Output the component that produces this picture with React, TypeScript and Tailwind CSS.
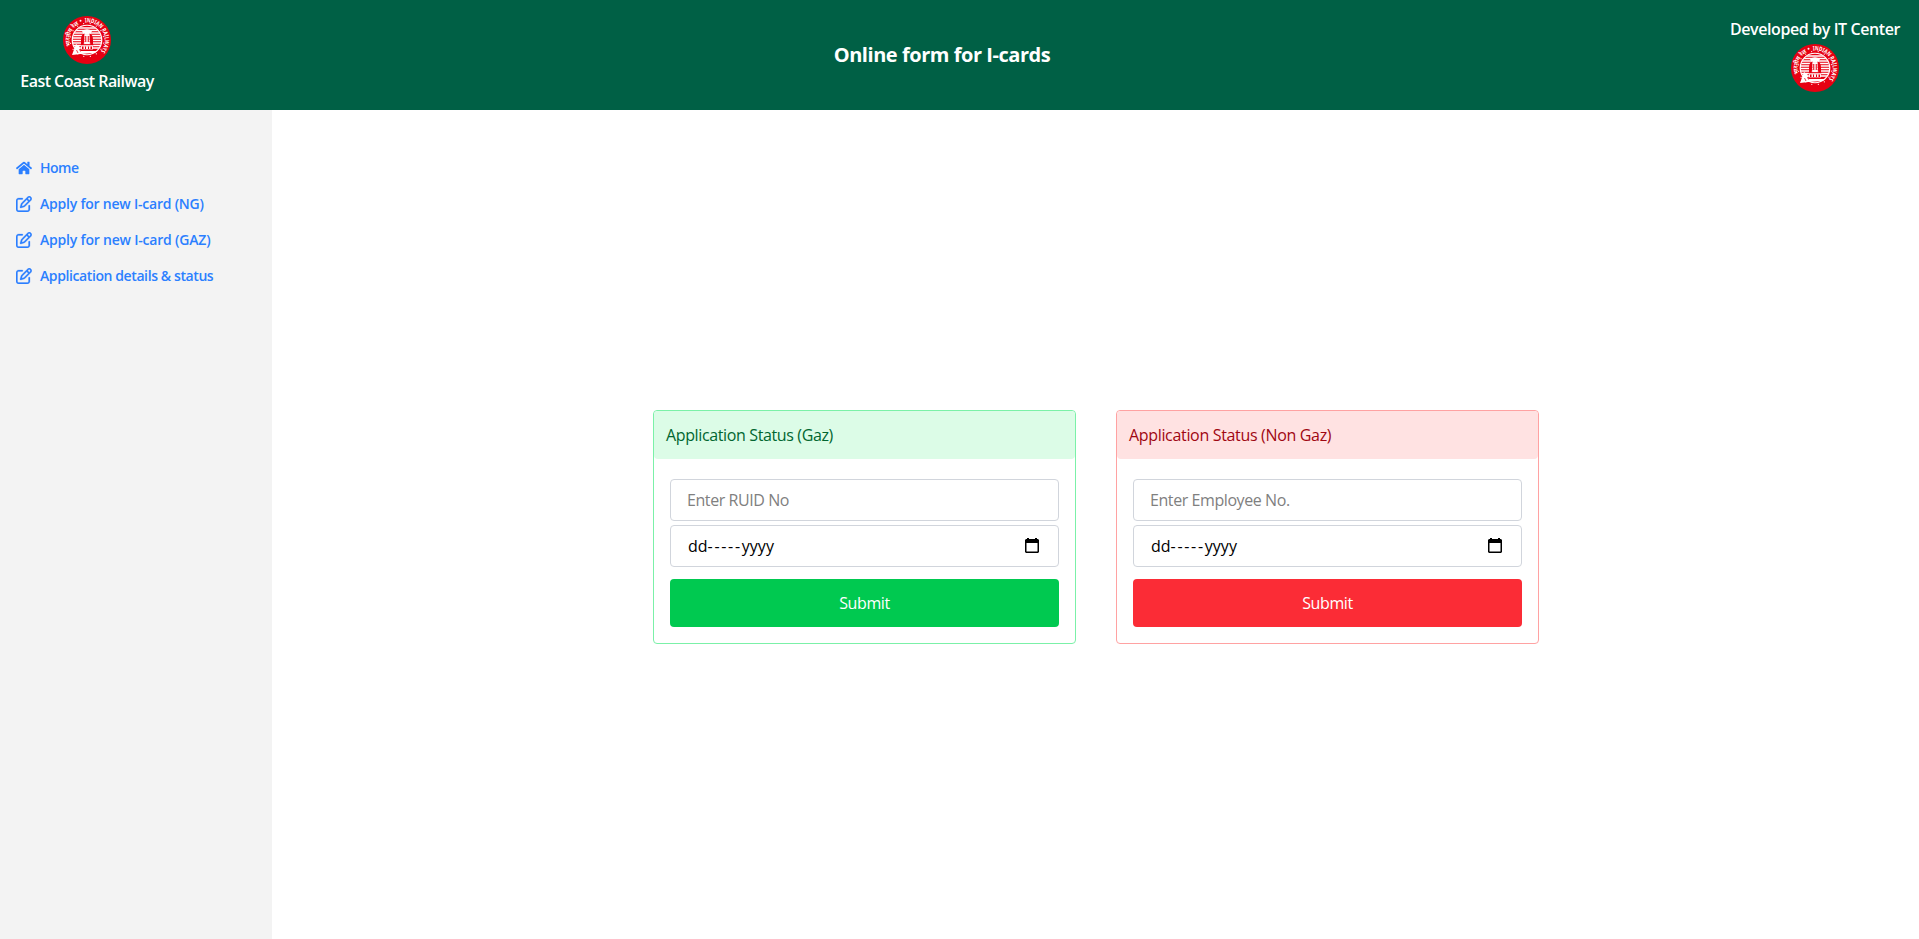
import { useId, type ReactNode } from "react";
import { FaHome } from "react-icons/fa";
import { FaRegPenToSquare } from "react-icons/fa6";

function RailwayLogo() {
  const id = useId();
  const dots = Array.from({ length: 16 }, (_, i) => i * 22.5);
  return (
    <svg viewBox="0 0 96 96" className="block size-12" aria-label="Indian Railways">
      <defs>
        <path id={`${id}-hi`} d="M 15.5 60 A 34.7 34.7 0 0 1 40 14.2" />
        <path id={`${id}-en`} d="M 44 13 A 35.2 35.2 0 0 1 72 74" />
        <clipPath id={`${id}-disc`}>
          <circle cx="48" cy="48" r="29" />
        </clipPath>
      </defs>
      <circle cx="48" cy="48" r="48" fill="#e60012" />
      <g fill="#fff" fontFamily="Noto Sans, sans-serif" fontWeight="700">
        <text fontSize="12">
          <textPath href={`#${id}-hi`} textLength="50" lengthAdjust="spacingAndGlyphs">भारतीय रेल</textPath>
        </text>
        <text fontSize="12">
          <textPath href={`#${id}-en`} textLength="84" lengthAdjust="spacingAndGlyphs">INDIAN RAILWAYS</textPath>
        </text>
      </g>
      <circle cx="35" cy="9.5" r="2" fill="#fff" />
      {dots.map((a) => (
        <circle key={a} cx="48" cy="14.6" r="1.2" fill="#fff" transform={`rotate(${a + 11} 48 48)`} />
      ))}
      <circle cx="48" cy="48" r="29.5" fill="none" stroke="#fff" strokeWidth="2.4" />
      <g clipPath={`url(#${id}-disc)`}>
        {[24, 29, 34, 39, 44, 49, 54, 59, 64].map((y) => (
          <path key={y} d={`M18 ${y}H78`} stroke="#fff" strokeWidth="3" />
        ))}
        <path d="M38 30q10-7 20 0l-3 6H41z" fill="#fff" />
      </g>
      <path d="M36 58V47q0-10 7-12v11l-2 12zM60 58V47q0-10-7-12v11l2 12z" fill="#e60012" />
      <path d="M43 36h10v20H43z" fill="#fff" opacity=".9" />
      <path d="M44.500 40h2v12h-2zM49.500 40h2v12h-2z" fill="#e60012" />
      <path d="M36 58h24v9H36z" fill="#fff" opacity=".8" />
      <path d="M35 57h26v1.500H35zM38 61h3v5h-3zM44 61h2v5h-2zM50 61h2v5h-2zM55 61h3v5h-3z" fill="#e60012" />
      <path d="M18 78l8-22 7 5 2 9h34l-6 4-28 2z" fill="#fff" />
      <path d="M27 68l3 6M33 66l2 5" stroke="#e60012" strokeWidth="1.500" />
    </svg>
  );
}

function NavLink({ icon, className, children }: { icon: ReactNode; className: string; children: ReactNode }) {
  return (
    <a href="#" className="flex h-9 items-center gap-2 text-sm font-semibold text-[#2b7fff]">
      {icon}
      <span className={className}>{children}</span>
    </a>
  );
}

function EditIcon() {
  return <FaRegPenToSquare className="size-4 stroke-current stroke-[8px]" />;
}

const tones = {
  green: {
    card: "border-[#7bf1a8]",
    head: "bg-[#dcfce7] text-[#016630] tracking-[-0.37px]",
    button: "bg-[#00c950]",
  },
  red: {
    card: "border-[#ffa2a2]",
    head: "bg-[#ffe2e2] text-[#9f0712] tracking-[-0.33px]",
    button: "bg-[#fb2c36]",
  },
};

function StatusCard({ tone, title, placeholder }: { tone: "green" | "red"; title: string; placeholder: string }) {
  const t = tones[tone];
  return (
    <section className={`w-[423px] rounded border ${t.card}`}>
      <h2 className={`flex h-12 items-center rounded pt-px pr-3 pl-[12.5px] ${t.head}`}>{title}</h2>
      <form className="flex flex-col px-4 pt-5 pb-4">
        <input
          placeholder={placeholder}
          className="h-[42px] rounded border border-[#d1d5dc] pr-4 pl-[16.5px] tracking-[-0.42px] placeholder:text-[#808080]"
        />
        <div className="mt-1 flex h-[42px] items-center justify-between rounded border border-[#d1d5dc] pr-[19px] pl-[17.5px] text-black">
          <span>
            dd<span className="tracking-[1.7px]">-----</span>yyyy
          </span>
          <svg viewBox="0 0 14 15" className="h-[15px] w-3.5">
            <path d="M2 0h2v1h6V0h2v1h1l1 1v12l-1 1H1l-1-1V2l1-1h1zM1.5 5v8.500h11V5z" fill="#000" fillRule="evenodd" />
          </svg>
        </div>
        <button type="button" className={`mt-3 h-12 rounded pt-px pl-px tracking-[-0.4px] text-white ${t.button}`}>
          Submit
        </button>
      </form>
    </section>
  );
}

export default function App() {
  return (
    <div className="flex h-[939px] flex-col bg-white font-['Open_Sans','Noto_Sans',sans-serif] text-base">
      <header className="flex h-[110px] shrink-0 items-start justify-between bg-[#006045] pt-4 pr-[19px] pl-5 font-semibold text-white">
        <div className="flex w-[134px] flex-col items-center gap-1 whitespace-nowrap">
          <RailwayLogo />
          <span className="pt-px tracking-[-0.55px]">East Coast Railway</span>
        </div>
        <h1 className="self-center pb-4 text-xl font-bold tracking-[-0.45px]">Online form for I-cards</h1>
        <div className="flex w-[170px] flex-col items-center whitespace-nowrap">
          <span className="h-7 pt-px tracking-[-0.4px]">Developed by IT Center</span>
          <RailwayLogo />
        </div>
      </header>
      <div className="flex grow">
        <aside className="w-[272px] shrink-0 bg-[#f3f3f3] px-4 pt-10">
          <nav>
            <NavLink icon={<FaHome className="size-4" />} className="tracking-[-0.5px]">Home</NavLink>
            <NavLink icon={<EditIcon />} className="tracking-[-0.22px]">Apply for new I-card (NG)</NavLink>
            <NavLink icon={<EditIcon />} className="tracking-[-0.2px]">Apply for new I-card (GAZ)</NavLink>
            <NavLink icon={<EditIcon />} className="tracking-[-0.4px]">Application details &amp; status</NavLink>
          </nav>
        </aside>
        <main className="flex grow items-center justify-center gap-10 pt-1">
          <StatusCard tone="green" title="Application Status (Gaz)" placeholder="Enter RUID No" />
          <StatusCard tone="red" title="Application Status (Non Gaz)" placeholder="Enter Employee No." />
        </main>
      </div>
    </div>
  );
}
